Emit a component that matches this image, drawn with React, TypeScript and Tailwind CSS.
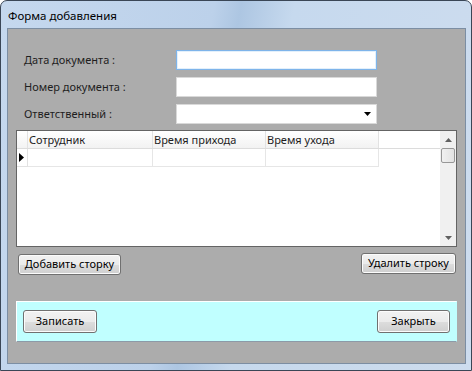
import React from "react";

const font = { fontFamily: '"Noto Sans", "Open Sans", sans-serif' };

function Btn({ children, className = "" }: { children: React.ReactNode; className?: string }) {
  return (
    <div
      className={
        "flex items-center justify-center rounded-[3px] border border-[#707070] text-[11px] text-black bg-[linear-gradient(to_bottom,#f2f2f2_0%,#ebebeb_50%,#dddddd_51%,#cfcfcf_100%)] shadow-[inset_0_0_0_1px_#fcfcfc] " +
        className
      }
    >
      {children}
    </div>
  );
}

export default function App() {
  return (
    <div style={font} className="w-[472px] h-[371px] overflow-hidden">
      <div className="w-[472px] h-[371px] border border-[#3a4656] rounded-t-[7px] bg-[linear-gradient(100deg,#c5d8ee_0%,#bcd1ea_40%,#adc6e2_45%,#c6d9ee_55%,#cddcee_100%)] flex flex-col pl-[6px] pr-[5px]">
        <div className="h-[27px] flex items-center pl-[1px] pt-[2px] text-[11.5px] text-black">
          Форма добавления
        </div>
        <div className="w-[459px] h-[336px] border border-[#7c8ea3] bg-[#acacac] flex flex-col text-[11px] text-[#1e1e1e]">
          <div className="mt-[21px] flex flex-col gap-[7px] pl-[16px]">
            <div className="flex items-center h-[20px]">
              <div className="w-[152px]">Дата документа :</div>
              <div className="w-[201px] h-[20px] bg-white border border-[#7eb4ea] shadow-[inset_0_0_0_1px_#e3f0fb]" />
            </div>
            <div className="flex items-center h-[20px]">
              <div className="w-[152px]">Номер документа :</div>
              <div className="w-[201px] h-[20px] bg-white border border-[#d9d9d9]" />
            </div>
            <div className="flex items-center h-[20px]">
              <div className="w-[152px]">Ответственный :</div>
              <div className="w-[201px] h-[20px] bg-white border border-[#d9d9d9] flex items-center justify-end pr-[5px]">
                <svg width="7" height="4" viewBox="0 0 7 4">
                  <path d="M0 0H7L3.5 4Z" fill="#000" />
                </svg>
              </div>
            </div>
          </div>

          <div className="mt-[6px] ml-[8px] w-[441px] h-[117px] border border-[#646464] bg-white flex">
            <div className="flex-1 flex flex-col">
              <div className="flex h-[18px] border-b border-[#dcdcdc]">
                <div className="w-[11px] bg-[linear-gradient(to_bottom,#ffffff,#f3f3f3)] border-r border-[#e2e2e2]" />
                <div className="w-[125px] pl-[1px] leading-[17px] bg-[linear-gradient(to_bottom,#ffffff,#f2f2f2)] border-r border-[#e2e2e2]">Сотрудник</div>
                <div className="w-[113px] pl-[1px] leading-[17px] bg-[linear-gradient(to_bottom,#ffffff,#f2f2f2)] border-r border-[#e2e2e2]">Время прихода</div>
                <div className="w-[113px] pl-[1px] leading-[17px] bg-[linear-gradient(to_bottom,#ffffff,#f2f2f2)] border-r border-[#e2e2e2]">Время ухода</div>
              </div>
              <div className="flex h-[18px]">
                <div className="w-[11px] border-r border-b border-[#e2e2e2] flex items-center pl-[2px]">
                  <svg width="5" height="9" viewBox="0 0 5 9">
                    <path d="M0 0L5 4.5L0 9Z" fill="#000" />
                  </svg>
                </div>
                <div className="w-[125px] border-r border-b border-[#e6e6e6]" />
                <div className="w-[113px] border-r border-b border-[#e6e6e6]" />
                <div className="w-[113px] border-r border-b border-[#e6e6e6]" />
              </div>
            </div>
            <div className="w-[16px] bg-[#f0f0f0] flex flex-col items-center">
              <div className="h-[17px] flex items-center justify-center">
                <svg width="7" height="4" viewBox="0 0 7 4">
                  <path d="M3.5 0L7 4H0Z" fill="#606060" />
                </svg>
              </div>
              <div className="w-[14px] h-[15px] rounded-[2px] border border-[#979797] bg-[linear-gradient(to_right,#f0f0f0,#e2e2e2)]" />
              <div className="flex-1" />
              <div className="h-[17px] flex items-center justify-center">
                <svg width="7" height="4" viewBox="0 0 7 4">
                  <path d="M0 0H7L3.5 4Z" fill="#606060" />
                </svg>
              </div>
            </div>
          </div>

          <div className="flex justify-between items-start ml-[10px] mr-[9px]">
            <Btn className="mt-[7px] w-[103px] h-[21px]">Добавить сторку</Btn>
            <Btn className="mt-[6px] w-[95px] h-[21px]">Удалить строку</Btn>
          </div>

          <div className="mt-[26px] ml-[8px] w-[441px] h-[41px] bg-[#c0ffff] border-t border-l border-white border-b border-r border-b-[#8c9aa8] border-r-[#c0ffff] flex items-center justify-between pl-[6px] pr-[6px]">
            <Btn className="w-[74px] h-[23px]">Записать</Btn>
            <Btn className="w-[73px] h-[23px]">Закрыть</Btn>
          </div>
        </div>
      </div>
    </div>
  );
}
